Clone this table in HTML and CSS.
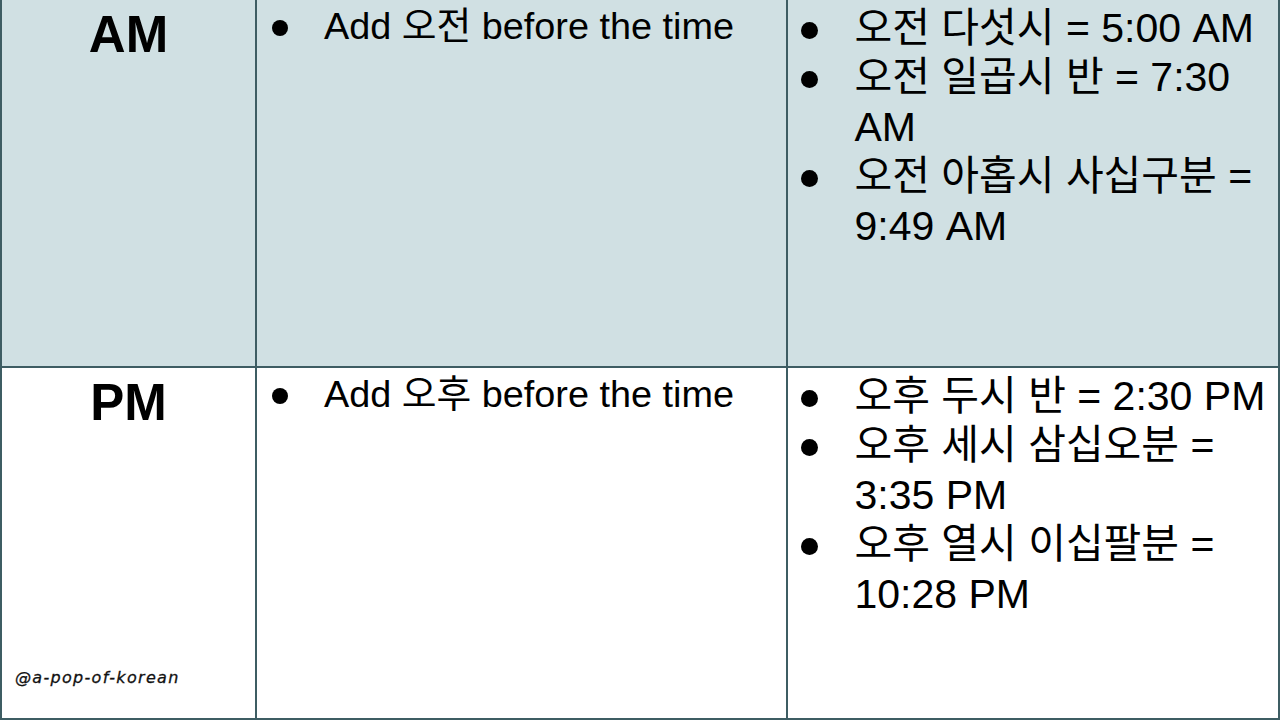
FILE: index.html
```html
<!DOCTYPE html>
<html lang="ko">
<head>
<meta charset="utf-8">
<title>AM / PM</title>
<link rel="stylesheet" href="styles.css">
</head>
<body>
<div class="table">
  <div class="cell head tinted">
    <span class="label">AM</span>
  </div>
  <div class="cell desc tinted">
    <ul class="list list-desc">
      <li>Add 오전 before the time</li>
    </ul>
  </div>
  <div class="cell examples tinted">
    <ul class="list list-ex">
      <li>오전 다섯시 = 5:00 AM</li>
      <li>오전 일곱시 반 = 7:30 AM</li>
      <li>오전 아홉시 사십구분 = 9:49 AM</li>
    </ul>
  </div>

  <div class="cell head plain">
    <span class="label">PM</span>
    <span class="watermark">@a-pop-of-korean</span>
  </div>
  <div class="cell desc plain">
    <ul class="list list-desc">
      <li>Add 오후 before the time</li>
    </ul>
  </div>
  <div class="cell examples plain">
    <ul class="list list-ex">
      <li>오후 두시 반 = 2:30 PM</li>
      <li>오후 세시 삼십오분 = 3:35 PM</li>
      <li>오후 열시 이십팔분 = 10:28 PM</li>
    </ul>
  </div>
</div>
</body>
</html>
```

FILE: styles.css
```css
* { box-sizing: border-box; }

html, body {
  margin: 0;
  padding: 0;
  background: #ffffff;
}

body {
  font-family: "Liberation Sans", "Noto Sans CJK KR", Arial, sans-serif;
  color: #000;
}

.table {
  width: 1280px;
  height: 720px;
  display: grid;
  grid-template-columns: 253px 529px 490px;
  grid-template-rows: 366px 350px;
  gap: 2px;
  padding: 0 2px 2px 2px;
  background: #3e5d63;
  overflow: hidden;
}

.cell {
  min-width: 0;
}

.tinted { background: #d0e0e3; }
.plain { background: #ffffff; }

.head {
  display: flex;
  flex-direction: column;
  align-items: center;
  padding-top: 6px;
}

.label {
  font-size: 51px;
  font-weight: 700;
  line-height: 58px;
}

.watermark {
  margin-top: auto;
  align-self: flex-start;
  margin-left: 13px;
  margin-bottom: 31px;
  font-family: "DejaVu Sans", sans-serif;
  font-style: italic;
  font-size: 16px;
  font-weight: 400;
  color: #111;
  letter-spacing: 1.3px;
  -webkit-text-stroke: 0.3px #111;
}

.list {
  list-style: none;
  margin: 0;
  padding: 0;
}

.list li {
  display: flex;
  align-items: flex-start;
}

.list li::before {
  content: "";
  flex: none;
  border-radius: 50%;
  background: #000;
}

.desc {
  padding: 2.5px 10px 0 15px;
}

.list-desc li {
  font-size: 37.8px;
  line-height: 47px;
}

.list-desc li::before {
  width: 16px;
  height: 16px;
  margin-top: 17px;
  margin-right: 36px;
}

.examples {
  padding: 3.5px 0 0 12.5px;
}

.list-ex li {
  font-size: 41px;
  line-height: 49.5px;
}

.list-ex li::before {
  width: 17px;
  height: 17px;
  margin-top: 18px;
  margin-right: 37px;
}
```
